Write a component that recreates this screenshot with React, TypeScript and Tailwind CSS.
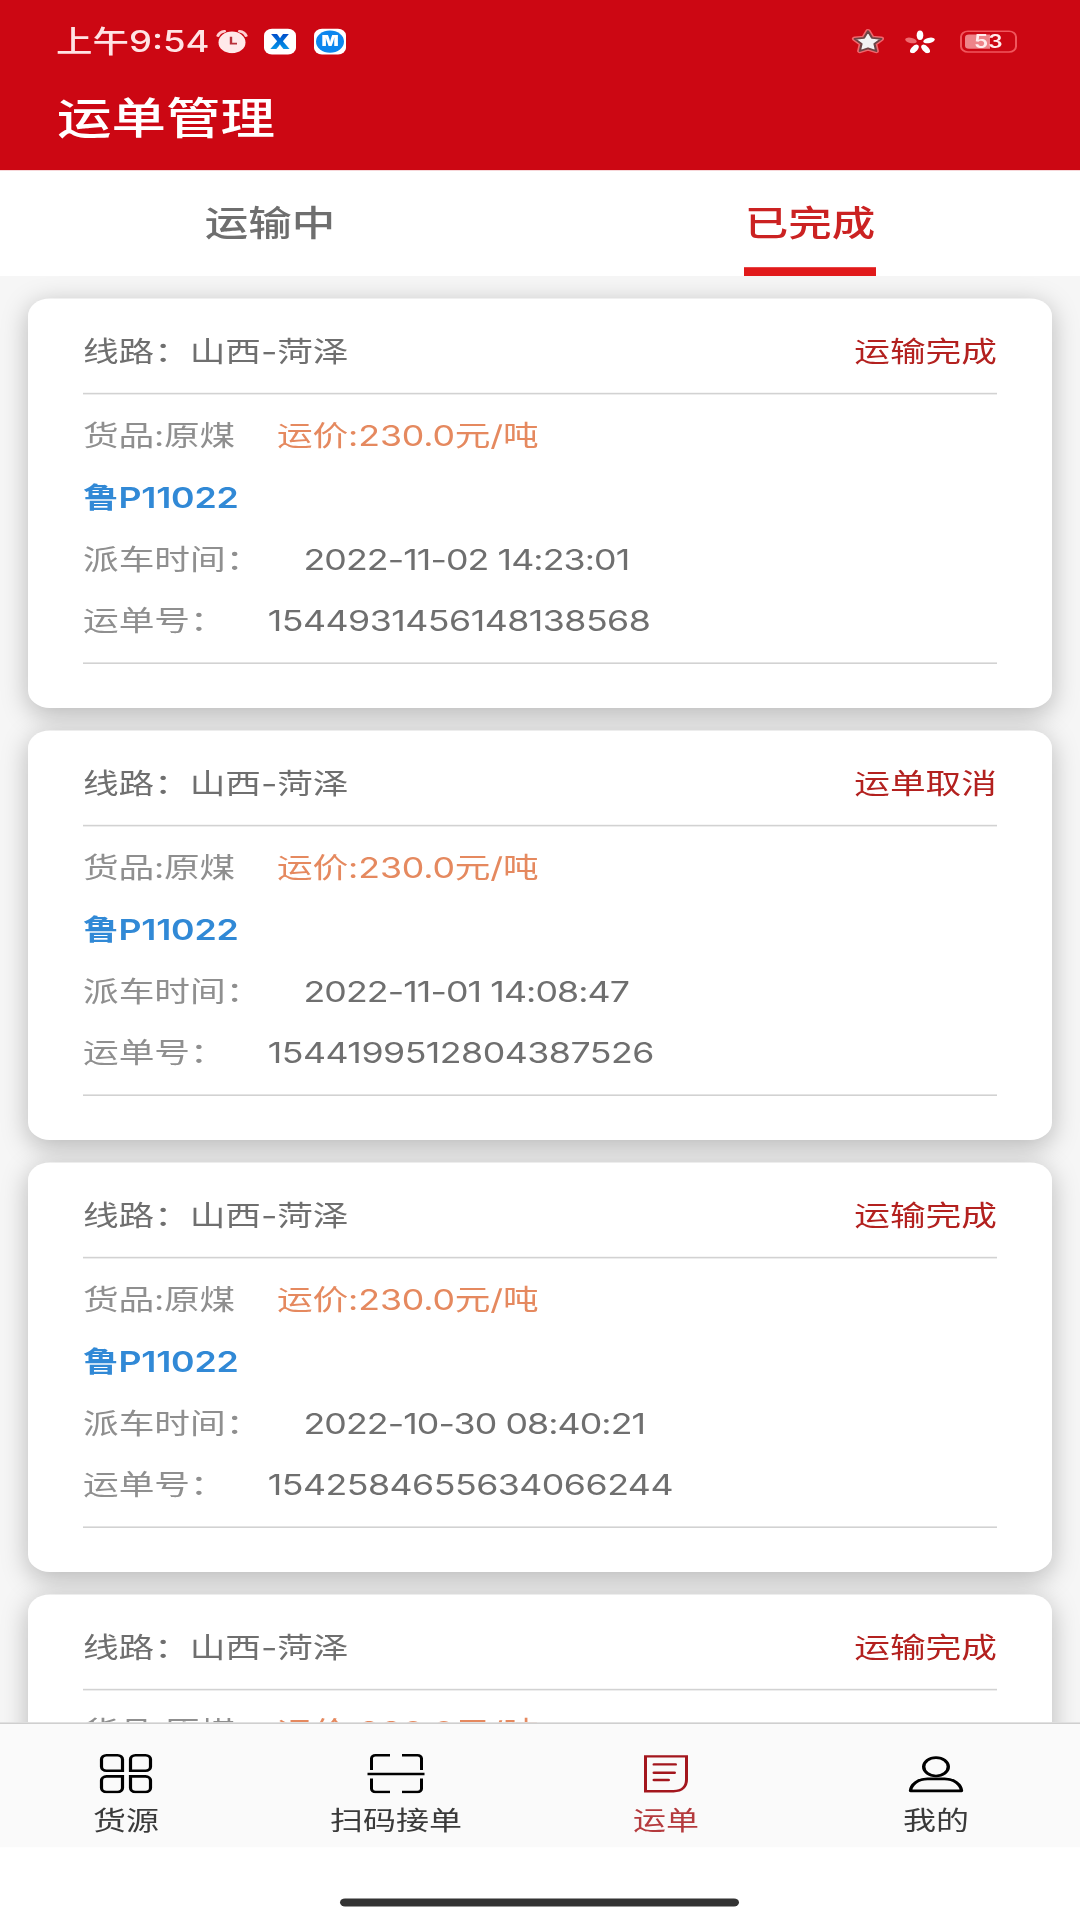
import type { ReactNode } from 'react';
import { clsx } from 'clsx';

interface Waybill {
  route: string;
  status: string;
  goods: string;
  price: string;
  plate?: string;
  dispatchedAt?: string;
  number?: string;
}

const base = { route: '山西-菏泽', goods: '原煤', price: '230.0元/吨' };
const plate = '鲁P11022';

const waybills: Waybill[] = [
  { ...base, plate, status: '运输完成', dispatchedAt: '2022-11-02 14:23:01', number: '1544931456148138568' },
  { ...base, plate, status: '运单取消', dispatchedAt: '2022-11-01 14:08:47', number: '1544199512804387526' },
  { ...base, plate, status: '运输完成', dispatchedAt: '2022-10-30 08:40:21', number: '1542584655634066244' },
  { ...base, status: '运输完成' },
];

function AlarmIcon() {
  return (
    <svg className="h-[30px] w-8" viewBox="0 0 32 30" fill="none">
      <circle cx="16" cy="16" r="13.5" fill="#ffe9ea" />
      <path d="M2 7.5C3 4.5 5.5 2.5 8.5 2M30 7.5C29 4.5 26.5 2.5 23.5 2" stroke="#ffd0d3" strokeWidth="3.2" strokeLinecap="round" />
      <path d="M15 9v8.5h6" stroke="#b8313a" strokeWidth="2.4" />
    </svg>
  );
}

function StarIcon() {
  const outline = 'M17 3l4 8.3 9.3 1.2-6.8 6.3 1.7 9L17 24.5 8.8 27.8l1.7-9L3.7 12.5l9.3-1.2z';
  return (
    <svg className="h-8 w-[34px]" viewBox="0 0 34 32" strokeLinejoin="round">
      <path d={outline} fill="#e8e8e8" stroke="#f0676d" strokeWidth="5.5" />
      <path d={outline} fill="#f2f2f2" stroke="#6d4545" strokeWidth="2.2" />
    </svg>
  );
}

function PetalsIcon() {
  return (
    <svg className="h-[30px] w-8" viewBox="0 0 32 30">
      {[0, 72, 144, 216, 288].map((angle) => (
        <ellipse
          key={angle}
          cx="16"
          cy="7"
          rx="3.3"
          ry="6"
          fill={angle === 288 ? '#ef6a70' : '#ffffff'}
          transform={`rotate(${angle} 16 16.5)`}
        />
      ))}
    </svg>
  );
}

function GoodsIcon() {
  return (
    <svg className="h-[50px] w-[54px]" viewBox="0 0 54 50" fill="none" stroke="currentColor" strokeWidth="3.2">
      <path d="M7.5 2h11a5 5 0 0 1 5 5v14.5h-16a5 5 0 0 1-5-5V7a5 5 0 0 1 5-5z" />
      <path d="M36.5 2h10a5 5 0 0 1 5 5v9.5a5 5 0 0 1-5 5h-15V7a5 5 0 0 1 5-5z" />
      <path d="M7.5 28.5h16V43a5 5 0 0 1-5 5h-11a5 5 0 0 1-5-5v-9.5a5 5 0 0 1 5-5z" />
      <path d="M31.5 28.5h15a5 5 0 0 1 5 5V43a5 5 0 0 1-5 5h-10a5 5 0 0 1-5-5z" />
    </svg>
  );
}

function ScanIcon() {
  return (
    <svg className="h-[50px] w-[58px]" viewBox="0 0 58 50" fill="none" stroke="currentColor" strokeWidth="3">
      <path d="M4.5 20.5V6a4 4 0 0 1 4-4H23M35 2h15.5a4 4 0 0 1 4 4v14.5M4.5 31v13a4 4 0 0 0 4 4H23M35 48h15.5a4 4 0 0 0 4-4V31" />
      <path d="M.5 25.5h57" />
    </svg>
  );
}

function WaybillIcon() {
  return (
    <svg className="h-[50px] w-[46px]" viewBox="0 0 46 50" fill="none" stroke="#a3161d" strokeWidth="3">
      <path d="M2.5 3.5h41v29c0 8-4 14.5-13 14.5h-28z" />
      <path d="M11 13.5h21.5M11 24h20.5M11 33h14.5" strokeLinecap="round" />
    </svg>
  );
}

function ProfileIcon() {
  return (
    <svg className="h-[50px] w-14" viewBox="0 0 56 50" fill="none" stroke="currentColor" strokeWidth="3.4">
      <ellipse cx="28" cy="16.5" rx="12.3" ry="11.5" />
      <path d="M2.5 46.5C3 38.5 10 31.5 19.5 31.5h17C46 31.5 53 38.5 53.5 46.5z" strokeLinejoin="round" />
    </svg>
  );
}

function StatusBar() {
  return (
    <div className="flex h-[104px] items-center justify-between pr-[63px] pl-14">
      <div className="flex items-center">
        <span className="w-[160px] text-[36.5px] leading-none font-medium whitespace-nowrap text-[#ffe3e4]">
          上午9:54
        </span>
        <AlarmIcon />
        <span className="ml-4 grid h-8 w-8 place-items-center rounded-lg bg-white">
          <span className="bg-gradient-to-b from-[#0b3fc4] to-[#16a2ee] bg-clip-text text-[26px] leading-none font-black text-transparent">
            X
          </span>
        </span>
        <span className="ml-[18px] grid h-8 w-8 place-items-center rounded-lg bg-white">
          <span className="grid h-[28px] w-[28px] place-items-center rounded-full bg-[#0d86ee] text-[18px] leading-none font-black text-white">
            M
          </span>
        </span>
      </div>
      <div className="flex items-center">
        <StarIcon />
        <span className="ml-[19px]">
          <PetalsIcon />
        </span>
        <div className="ml-6 h-7 w-[57px] rounded-lg border-2 border-[#f0575d] p-[3px]">
          <div className="h-full w-[25px] rounded-l-[4px] bg-[#ee8489] pl-[9px] text-[22.5px] leading-[18px] font-semibold text-[#ffecec]">
            53
          </div>
        </div>
      </div>
    </div>
  );
}

function Tab({ label, active }: { label: string; active?: boolean }) {
  return (
    <div className="flex flex-1 justify-center">
      <div
        className={clsx(
          'flex h-full w-[132px] justify-center border-b-[11px] pt-[30px] text-[43.5px] leading-[72px] font-medium whitespace-nowrap',
          active ? 'border-[#e11a1b] text-[#cb2222]' : 'border-transparent text-[#6e6e6e]',
        )}
      >
        {label}
      </div>
    </div>
  );
}

function WaybillCard({ waybill }: { waybill: Waybill }) {
  return (
    <article className="h-[512.5px] shrink-0 rounded-[22px] bg-white px-[55px] text-[35.7px] whitespace-nowrap text-[#6f6f6f] shadow-[0_8px_30px_rgba(0,0,0,0.26)]">
      <div className="flex h-[120px] items-center justify-between border-b-2 border-[#d2d2d2] pt-4">
        <span className="tracking-[-0.1px]">线路：{waybill.route}</span>
        <span className="text-[#b3211f]">{waybill.status}</span>
      </div>
      <div className="h-[337px] border-b-2 border-[#d2d2d2] pt-[14px] leading-[77.2px]">
        <div className="flex gap-[42px]">
          <span className="tracking-[-0.2px] text-[#8f8f8f]">货品:{waybill.goods}</span>
          <span className="tracking-[-0.15px] text-[#e5895f]">运价:{waybill.price}</span>
        </div>
        {waybill.plate && (
          <div className="font-semibold tracking-[-0.2px] text-[#3189d6]">{waybill.plate}</div>
        )}
        {waybill.dispatchedAt && (
          <div className="flex gap-[42px]">
            <span className="text-[#8f8f8f]">派车时间：</span>
            <span className="tracking-[-0.9px]">{waybill.dispatchedAt}</span>
          </div>
        )}
        {waybill.number && (
          <div className="flex gap-[42px]">
            <span className="text-[#8f8f8f]">运单号：</span>
            <span className="tracking-[-0.5px]">{waybill.number}</span>
          </div>
        )}
      </div>
    </article>
  );
}

function NavItem({ icon, label, active }: { icon: ReactNode; label: string; active?: boolean }) {
  return (
    <div className="flex w-[270px] shrink-0 flex-col items-center pt-[37px] text-black">
      {icon}
      <span className={clsx('mt-[8px] text-[33px] leading-[52px]', active ? 'text-[#b43a3d]' : 'text-[#3a3a3a]')}>
        {label}
      </span>
    </div>
  );
}

export default function App() {
  return (
    <div className="h-[1920px] w-[1080px] overflow-hidden bg-white">
      {/* 1080x2400 handset layout squeezed to a 16:9 viewport */}
      <div className="flex h-[2400px] origin-top scale-y-80 flex-col font-[Inter,'Noto_Sans_CJK_SC',sans-serif]">
        <header className="h-[212.5px] shrink-0 bg-[#cc0713]">
          <StatusBar />
          <h1 className="pl-[57px] text-[54.5px] leading-[88px] font-medium text-white">运单管理</h1>
        </header>

        <nav className="flex h-[132.5px] shrink-0 bg-white">
          <Tab label="运输中" />
          <Tab label="已完成" active />
        </nav>

        <main className="flex min-h-0 flex-1 flex-col gap-[27.5px] overflow-hidden bg-[#f6f6f6] px-7 pt-[27.5px]">
          {waybills.map((waybill, index) => (
            <WaybillCard key={index} waybill={waybill} />
          ))}
        </main>

        <footer className="h-[156.5px] shrink-0 border-t-2 border-[#cfcfcf] bg-[#fafafa]">
          <div className="-ml-[9px] flex">
            <NavItem icon={<GoodsIcon />} label="货源" />
            <NavItem icon={<ScanIcon />} label="扫码接单" />
            <NavItem icon={<WaybillIcon />} label="运单" active />
            <NavItem icon={<ProfileIcon />} label="我的" />
          </div>
        </footer>
        <div className="flex h-[91px] shrink-0 justify-center bg-white pt-[64px] pr-px">
          <div className="h-[10px] w-[399px] rounded-full bg-[#333333]" />
        </div>
      </div>
    </div>
  );
}
